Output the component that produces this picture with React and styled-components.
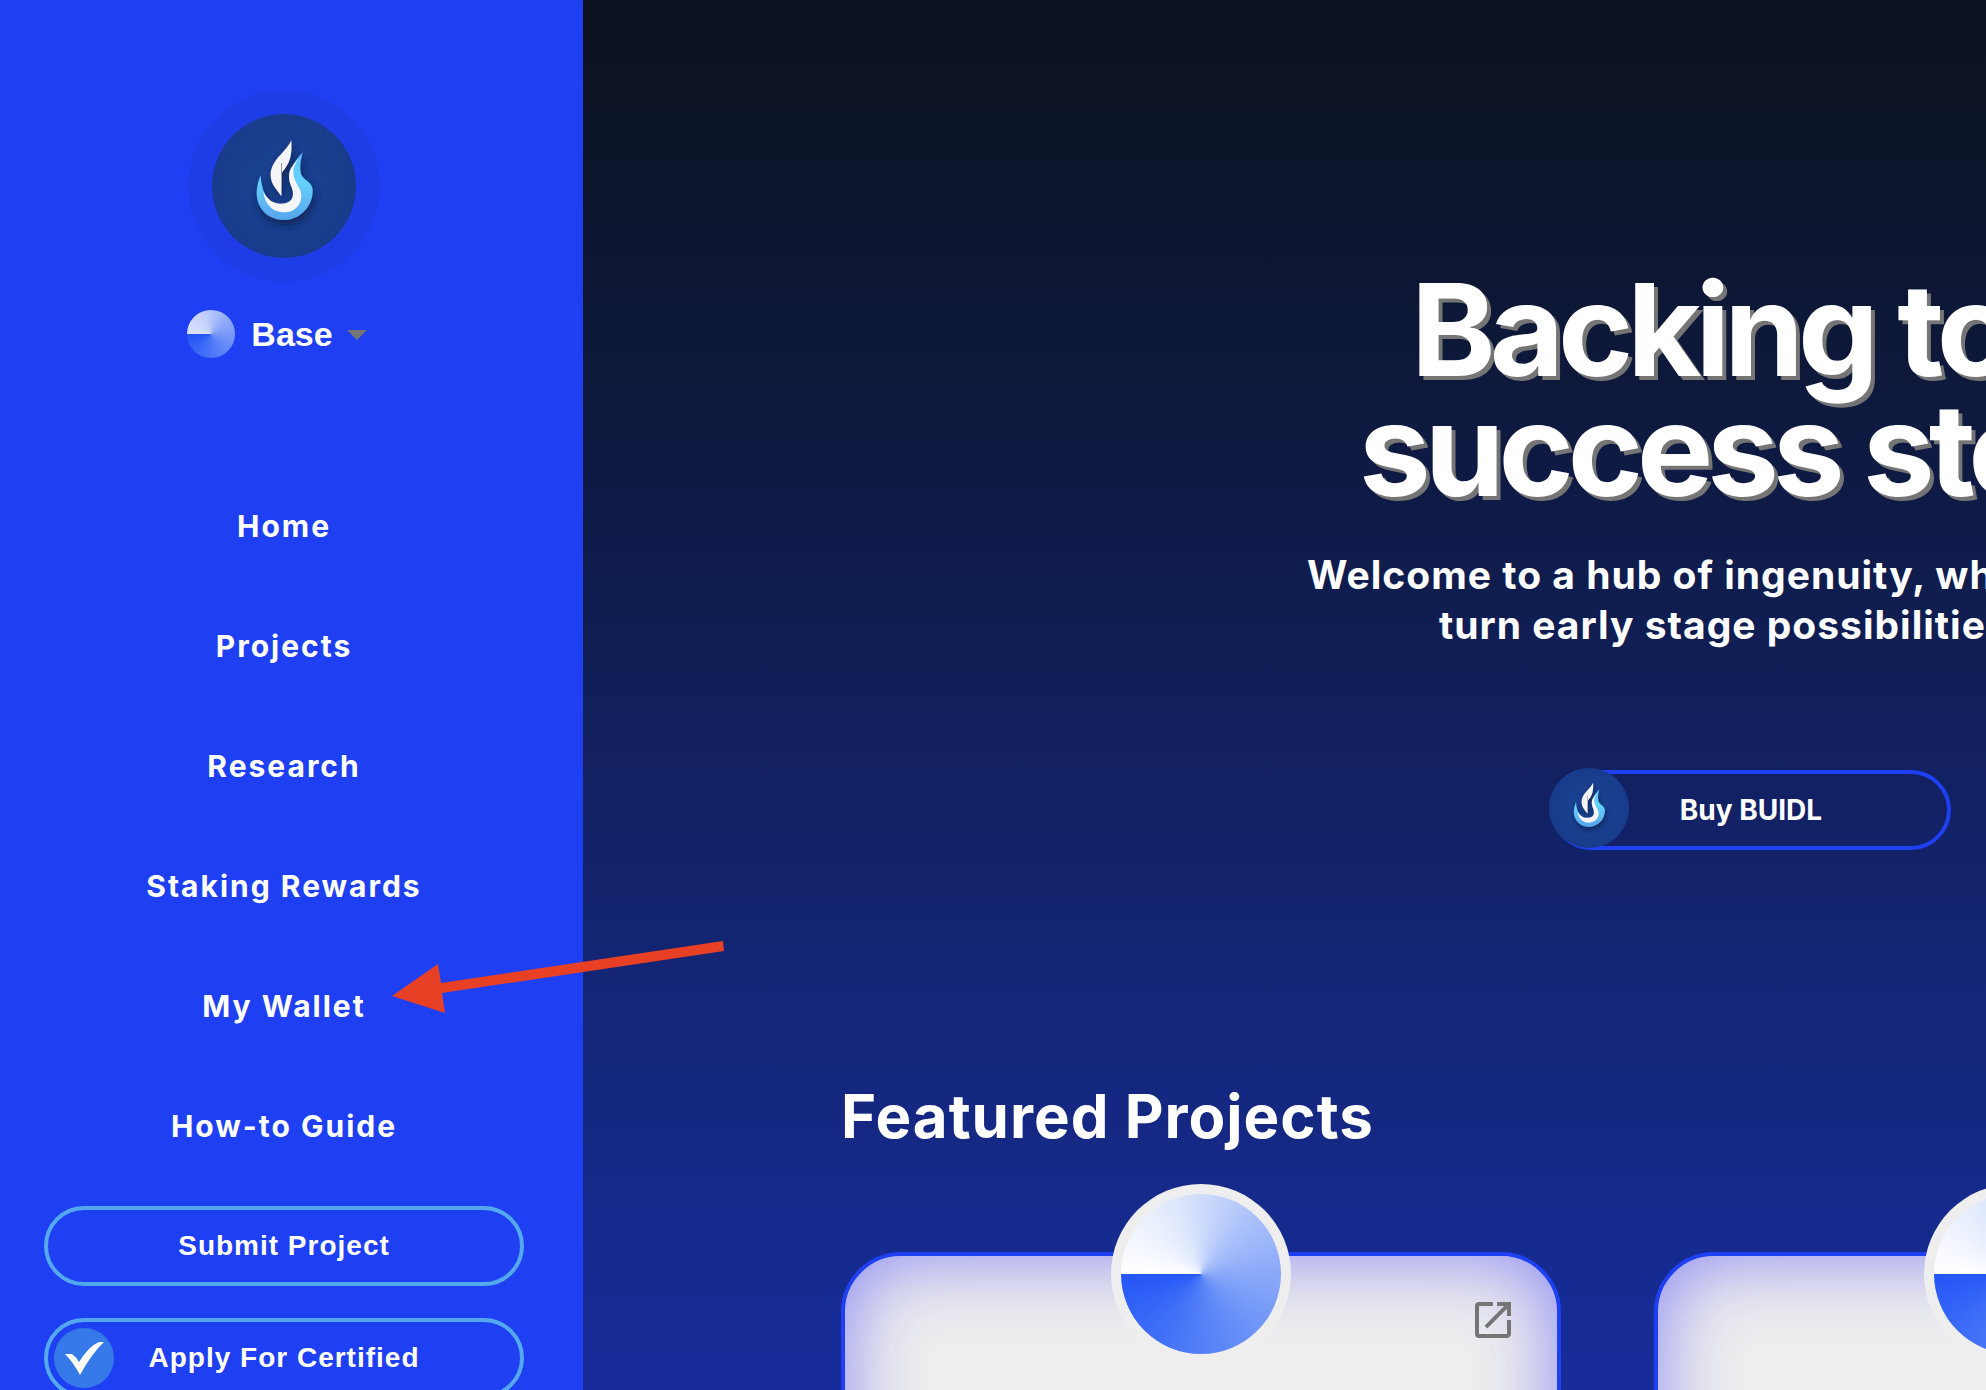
import React from "react";
import styled, { createGlobalStyle } from "styled-components";
import { MdOpenInNew, MdArrowDropDown } from "react-icons/md";

const Global = createGlobalStyle`
  * { box-sizing: border-box; }
  html, body, #root { height: 100%; }
  body {
    margin: 0;
    overflow: hidden;
    background: #0b111e;
    color: #fff;
    font-family: Inter, "Liberation Sans", sans-serif;
  }
`;

const Page = styled.div`
  display: flex;
  height: 100%;
`;

const Sidebar = styled.aside`
  flex: 0 0 583px;
  display: flex;
  flex-direction: column;
  align-items: center;
  padding: 90px 59px 0 44px;
  background: #1e40f2;
  overflow: hidden;
`;

const LogoRing = styled.a`
  display: flex;
  flex: none;
  padding: 24px;
  border-radius: 50%;
  background: #1e3de6;
`;

const Logo = styled.svg`
  display: block;
  width: ${(p) => p.$size}px;
  height: ${(p) => p.$size}px;
  border-radius: 50%;
  background: radial-gradient(circle, #1b4393 0%, #183c8b 70%);
`;

const Network = styled.button`
  display: flex;
  flex: none;
  align-items: center;
  height: 48px;
  margin: 28px 0 108px;
  padding: 0;
  border: 0;
  background: none;
  color: #fff;
  font: 700 34px/44px "Liberation Sans", Arial, sans-serif;
`;

const NetworkName = styled.span`
  margin-left: 16px;
`;

const Caret = styled(MdArrowDropDown)`
  width: 48px;
  height: 48px;
  color: #757575;
`;

const Disc = styled.span`
  display: block;
  flex: none;
  width: ${(p) => p.$size}px;
  height: ${(p) => p.$size}px;
  border-radius: 50%;
  background: conic-gradient(from 270deg, #fff, #dde7fc 20%, #a9c0fa 37%, #8aa9f9 50%, #5c88f7 70%, #2456f7);
  opacity: ${(p) => p.$opacity || 1};
`;

const Nav = styled.nav`
  display: flex;
  flex-direction: column;
  align-items: center;
`;

const NavLink = styled.a`
  height: 120px;
  line-height: 120px;
  font-size: 30px;
  font-weight: 700;
  letter-spacing: 2px;
  color: #fff;
  text-decoration: none;
`;

const Actions = styled.div`
  display: flex;
  flex-direction: column;
  align-self: stretch;
  gap: 32px;
  margin-top: 20px;
`;

const OutlineButton = styled.button`
  display: flex;
  flex: none;
  align-items: center;
  justify-content: center;
  position: relative;
  width: ${(p) => p.$width};
  height: 80px;
  padding: 0;
  border: 4px solid ${(p) => p.$border};
  border-radius: 40px;
  background: none;
  color: #fff;
  font-family: ${(p) => p.$font};
  font-size: 28px;
  font-weight: 700;
  letter-spacing: ${(p) => p.$spacing};
`;

const Badge = styled.span`
  position: absolute;
  left: ${(p) => p.$left}px;
  top: ${(p) => p.$top}px;
  display: flex;
`;

const Main = styled.main`
  flex: 1;
  min-width: 0;
  overflow: hidden;
  padding: 270px 0 0 258px;
  background: linear-gradient(180deg, #0b111d 0%, #0e1a42 33%, #122163 57%, #152a8a 86%, #172c9a 100%);
`;

const Hero = styled.section`
  display: flex;
  flex-direction: column;
  align-items: flex-start;
  padding-left: 466px;
  white-space: nowrap;
`;

const Title = styled.h1`
  margin: 0;
  font-size: 128px;
  font-weight: 700;
  line-height: 120px;
  letter-spacing: -6px;
  text-shadow: 4px 4px 0 #757575;
`;

const Lead = styled.p`
  margin: 40px 0 0;
  font-size: 39px;
  font-weight: 700;
  line-height: 50px;
  letter-spacing: 1px;
`;

const Line = styled.span`
  display: block;
  padding-left: ${(p) => p.$indent}px;
`;

const HeroAction = styled.div`
  padding: 120px 0 0 244px;
`;

const SectionTitle = styled.h2`
  margin: 230px 0 0;
  font-size: 60px;
  font-weight: 700;
  line-height: 72px;
  letter-spacing: 1px;
`;

const Cards = styled.div`
  display: flex;
  gap: 93px;
  margin-top: 100px;
`;

const Card = styled.article`
  position: relative;
  flex: 0 0 720px;
  height: 800px;
  display: flex;
  justify-content: flex-end;
  align-items: flex-start;
  padding: 40px;
  border: 4px solid #1e40f2;
  border-radius: 60px;
  background: #eee;
  box-shadow: inset 0 0 80px #8886f2;
`;

const Avatar = styled.span`
  position: absolute;
  left: 50%;
  top: -72px;
  transform: translateX(-50%);
  padding: 10px;
  border-radius: 50%;
  background: #eee;
`;

const OpenLink = styled.a`
  display: flex;
  color: #757575;
  font-size: 48px;
`;

const Arrow = styled.svg`
  position: absolute;
  left: 392px;
  top: 940px;
  width: 334px;
  height: 75px;
  pointer-events: none;
`;

const arial = '"Liberation Sans", Arial, sans-serif';
const inter = 'Inter, sans-serif';

function Flame({ size }) {
  const id = `flame${size}`;
  return (
    <Logo $size={size} viewBox="187 102 432 432" aria-hidden="true">
      <defs>
        <linearGradient id={id} x1="0" y1="0" x2="0" y2="1">
          <stop offset="0" stopColor="#5cc4f8" />
          <stop offset="0.45" stopColor="#66d0fc" />
          <stop offset="1" stopColor="#56a4ee" />
        </linearGradient>
        <filter id={`${id}s`} x="-40%" y="-40%" width="180%" height="180%">
          <feDropShadow dx="5" dy="14" stdDeviation="13" floodColor="#0a1a4c" floodOpacity="0.85" />
        </filter>
      </defs>
      <g filter={`url(#${id}s)`}>
        <path
          fill={`url(#${id})`}
          d="M459 217C440 240 425 255 425 280C425 305 443 320 443 345C443 365 430 385 403 385C365 385 335 345 333 285C327 300 321 318 321 340C321 385 355 420 402 420C455 420 489 375 489 332C489 302 457 303 453 277C450 256 453 240 459 217Z"
        />
        <path
          fill="#f5f5f7"
          d="M446 238C430 255 418 268 418 290C418 312 430 322 430 342C430 364 412 371 394 371C368 371 352 356 341 335C345 375 372 397 403 397C435 397 455 375 455 347C455 322 432 308 431 278C431 260 438 250 446 238Z"
        />
        <path
          fill="#f5f5f7"
          d="M425 181C408 218 363 240 363 285C363 312 380 326 395 349L397 278C412 258 429 240 425 181Z"
        />
      </g>
      <path d="M394 250L397 250L396 345L394 330Z" fill="#8b8f9b" />
    </Logo>
  );
}

const links = ["Home", "Projects", "Research", "Staking Rewards", "My Wallet", "How-to Guide"];

export default function App() {
  return (
    <>
      <Global />
      <Page>
        <Sidebar>
          <LogoRing href="#" aria-label="Home page">
            <Flame size={144} />
          </LogoRing>
          <Network type="button">
            <Disc $size={48} $opacity={0.85} />
            <NetworkName>Base</NetworkName>
            <Caret />
          </Network>
          <Nav>
            {links.map((name) => (
              <NavLink key={name} href="#">{name}</NavLink>
            ))}
          </Nav>
          <Actions>
            <OutlineButton type="button" $width="100%" $border="#54a8ee" $font={arial} $spacing="1px">
              Submit Project
            </OutlineButton>
            <OutlineButton type="button" $width="100%" $border="#54a8ee" $font={arial} $spacing="1px">
              <Badge $left={6} $top={6}>
                <svg width="60" height="60" viewBox="0 0 60 60" aria-hidden="true">
                  <circle cx="30" cy="30" r="30" fill="#3679e8" />
                  <path fill="#fff" d="M11 26H18Q22 29 25 34Q35 18 45 14L50 14Q38 25 26 47Q19 34 11 26Z" />
                </svg>
              </Badge>
              Apply For Certified
            </OutlineButton>
          </Actions>
        </Sidebar>
        <Main>
          <Hero>
            <Title>
              <Line $indent={104}>Backing to</Line>
              <Line $indent={52}>success sto</Line>
            </Title>
            <Lead>
              <Line $indent={0}>Welcome to a hub of ingenuity, wh</Line>
              <Line $indent={132}>turn early stage possibilitie</Line>
            </Lead>
            <HeroAction>
              <OutlineButton type="button" $width="400px" $border="#1e40f2" $font={inter} $spacing="0">
                <Badge $left={-6} $top={-6}>
                  <Flame size={80} />
                </Badge>
                Buy BUIDL
              </OutlineButton>
            </HeroAction>
          </Hero>
          <SectionTitle>Featured Projects</SectionTitle>
          <Cards>
            {[1, 2].map((n) => (
              <Card key={n}>
                <Avatar><Disc $size={160} /></Avatar>
                <OpenLink href="#" aria-label="Open project"><MdOpenInNew /></OpenLink>
              </Card>
            ))}
          </Cards>
        </Main>
      </Page>
      <Arrow viewBox="392 940 334 75" aria-hidden="true">
        <path
          fill="#e84025"
          d="M392 996L438 964L441 983L723 941L724 951L442 993L445 1013Z"
        />
      </Arrow>
    </>
  );
}
